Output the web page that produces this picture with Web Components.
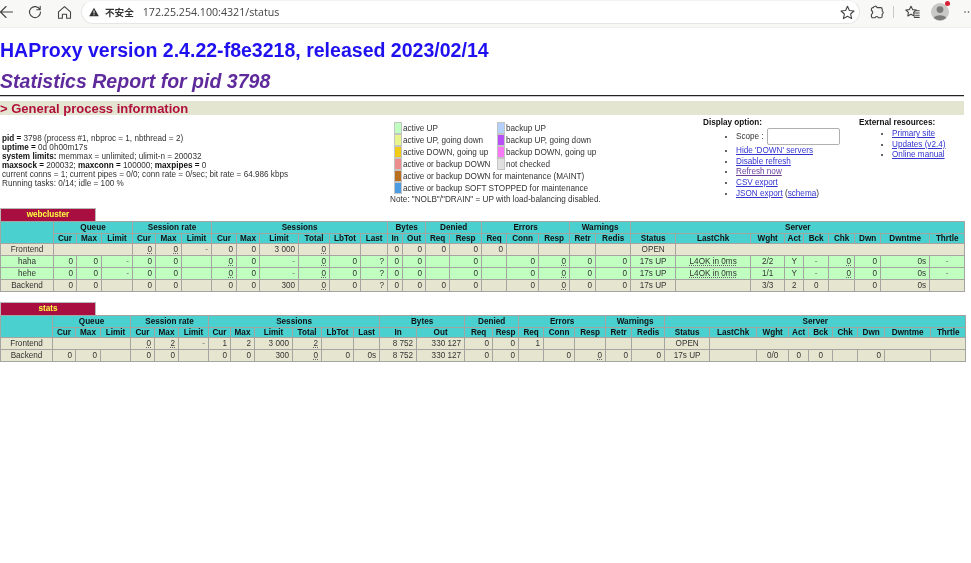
<!DOCTYPE html>
<html lang="en">
<head>
<meta charset="utf-8">
<title>Statistics Report for HAProxy</title>
<style>
html, body { margin: 0; background: #fff; }
body { font-family: "Liberation Sans", Arial, sans-serif; font-size: 8.17px; color: #222; overflow: hidden; filter: blur(.35px); }
link-list a { color: #3434d0; }
link-list a.seen { color: #663c99; }
link-list li.scope { height: 17px; line-height: 17px; margin-top: 0; margin-bottom: 1px; }
link-list input { box-sizing: border-box; width: 73px; height: 17px; margin: 0 0 0 1px; padding: 0; vertical-align: top; background: #fff; border: 1px solid #b0b0ae; border-radius: 2px; }
</style>
</head>
<body>
<browser-bar url="172.25.254.100:4321/status"></browser-bar>
<report-header version="HAProxy version 2.4.22-f8e3218, released 2023/02/14" title="Statistics Report for pid 3798"></report-header>
<info-panel>
  <process-info slot="process"></process-info>
  <status-legend slot="legend"></status-legend>
  <link-list slot="display" heading="Display option:">
    <li class="scope">Scope : <input type="text"></li>
    <li><a href="#">Hide 'DOWN' servers</a></li>
    <li><a href="#">Disable refresh</a></li>
    <li><a href="#" class="seen">Refresh now</a></li>
    <li><a href="#">CSV export</a></li>
    <li><a href="#">JSON export</a> (<a href="#">schema</a>)</li>
  </link-list>
  <link-list slot="external" heading="External resources:">
    <li><a href="#">Primary site</a></li>
    <li><a href="#">Updates (v2.4)</a></li>
    <li><a href="#">Online manual</a></li>
  </link-list>
</info-panel>
<stat-table name="webcluster"></stat-table>
<stat-table name="stats"></stat-table>

<script>
(function() {
    'use strict';

    // Column widths were read off the reference, they differ per proxy
    const TABLES = {
        webcluster: {
            top: 0,
            widths: [53,23,25,31,23,26,30,25,23,39,31,31,27,15,23,24,32,25,32,31,26,35,45,75,34,19,25,26,26,49,35],
            rows: [
                ['front', 'Frontend|^3|0_|0_|-|0|0|3 000|0_|||0|0|0|0|0|||||OPEN|^8'],
                ['up', 'haha|0|0|-|0|0||0_|0|-|0_|0|?|0|0||0||0|0_|0|0|17s UP|L4OK in 0ms_|2/2|Y|-|0_|0|0s|-'],
                ['up', 'hehe|0|0|-|0|0||0_|0|-|0_|0|?|0|0||0||0|0_|0|0|17s UP|L4OK in 0ms_|1/1|Y|-|0_|0|0s|-'],
                ['back', 'Backend|0|0||0|0||0|0|300|0_|0|?|0|0|0|0||0|0_|0|0|17s UP||3/3|2|0||0|0s|']
            ]
        },
        stats: {
            top: 10,
            widths: [52,23,25,30,24,24,30,22,24,38,29,32,26,37,48,28,26,25,31,31,26,33,45,47,32,20,24,25,27,46,35],
            rows: [
                ['front', 'Frontend|^3|0_|2_|-|1|2|3 000|2_|||8 752|330 127|0|0|1|||||OPEN|^8'],
                ['back', 'Backend|0|0||0|0||0|0|300|0_|0|0s|8 752|330 127|0|0||0|0_|0|0|17s UP||0/0|0|0||0||']
            ]
        }
    };

    const GROUPS = [['Queue',3],['Session rate',3],['Sessions',6],['Bytes',2],['Denied',2],['Errors',3],['Warnings',2],['Server',9]];
    const HEADS = 'Cur Max Limit Cur Max Limit Cur Max Limit Total LbTot Last In Out Req Resp Req Conn Resp Retr Redis Status LastChk Wght Act Bck Chk Dwn Dwntme Thrtle'.split(' ');
    const CENTERED = { 0: 1, 22: 1, 23: 1, 24: 1, 25: 1, 26: 1, 30: 1 };

    class BrowserBar extends HTMLElement {
        connectedCallback() {
            const url = this.getAttribute('url');
            this.attachShadow({ mode: 'open' }).innerHTML = `
                <style>
                    :host { display: flex; align-items: flex-start; height: 27px; background: #f8f8f7; border-bottom: 1px solid #f0f0ee; color: #3c3c3c; }
                    svg { display: block; fill: none; stroke: #444; stroke-width: 1.1; stroke-linecap: round; stroke-linejoin: round; }
                    .nav { display: flex; width: 81px; height: 24px; align-items: center; flex: none; }
                    .nav svg:nth-child(2) { margin-left: 15px; }
                    .nav svg:nth-child(3) { margin-left: 15px; }
                    .pill { flex: none; box-sizing: border-box; width: 779px; height: 24px; display: flex; align-items: center; background: #fff; border: 1px solid #e6e6e4; border-top-color: #f2f2f0; border-radius: 12px; }
                    .warn { margin-left: 7px; }
                    .lbl { margin-left: 6px; font: bold 9.6px "Noto Sans CJK SC", sans-serif; color: #333; }
                    .url { margin-left: 9px; font: 10.65px "Open Sans", sans-serif; color: #444; }
                    .grow { flex: 1; }
                    .star { margin-right: 4px; }
                    .tools { display: flex; align-items: center; height: 24px; flex: none; }
                </style>
                <div class="nav">
                    <svg width="13" height="14" viewBox="0 0 13 14"><path d="M12.5 7H0.5M6 1.5L0.5 7L6 12.5"/></svg>
                    <svg width="14" height="14" viewBox="0 0 14 14"><path d="M11.9 4.6A5.5 5.5 0 1 0 12.5 7M12.2 1.4V4.8H8.8"/></svg>
                    <svg width="15" height="15" viewBox="0 0 15 15"><path d="M1.5 6.8L7.5 1.6L13.5 6.8V13.3H9.6V9.2H5.4V13.3H1.5Z"/></svg>
                </div>
                <div class="pill">
                    <svg class="warn" width="10" height="10" viewBox="0 0 12 11" style="stroke:none"><path fill="#333" d="M6 .3L11.8 10.6H.2Z"/><path fill="#fff" d="M5.4 3.8h1.2v3.6H5.4zM5.4 8.2h1.2v1.2H5.4z"/></svg>
                    <span class="lbl">不安全</span>
                    <span class="url">${url}</span>
                    <span class="grow"></span>
                    <svg class="star" width="15" height="15" viewBox="0 0 15 15"><path d="M7.5 1.3L9.4 5.5L14 6L10.6 9L11.6 13.6L7.5 11.2L3.4 13.6L4.4 9L1 6L5.6 5.5Z"/></svg>
                </div>
                <div class="tools">
                    <svg style="margin-left:10px" width="14" height="14" viewBox="0 0 14 14"><path d="M5 1.2C6 1 6.8 1.6 7 2.6H10.6C11.6 2.6 12.2 3.2 12.2 4.2V6C13.4 6.3 13.6 8.6 12.2 9V11C12.2 12.2 11.6 12.8 10.6 12.8H8.4C8 11 5.4 11 5 12.8H3C2 12.8 1.4 12.2 1.4 11V9.2C3.2 8.8 3.2 6 1.4 5.6V4.2C1.4 3.2 2 2.6 3 2.6H3.4C3.6 1.8 4.2 1.3 5 1.2Z"/></svg>
                    <span style="margin-left:9px;width:1px;height:12px;background:#c9c9c7"></span>
                    <svg style="margin-left:11px" width="15" height="14" viewBox="0 0 15 14"><path d="M6 1.2L7.6 4.6L11.2 5L8.6 7.4L9.2 11L6 9.2L2.8 11L3.4 7.4L.8 5L4.4 4.6ZM9.8 8H14.2M10.6 10.2H14.2M9.4 12.4H14.2M11.4 5.8H14.2"/></svg>
                    <span style="margin-left:11px;position:relative;width:18px;height:18px;border-radius:50%;background:#c9c9c6;display:block">
                        <svg width="18" height="18" viewBox="0 0 17 17" style="stroke:none"><circle cx="8.5" cy="6.2" r="3.2" fill="#7b7b79"/><path fill="#7b7b79" d="M2.8 14.2C3.4 10.8 13.6 10.8 14.2 14.2A8.5 8.5 0 0 1 2.8 14.2Z"/></svg>
                        <span style="position:absolute;right:-1px;top:-2px;width:5px;height:5px;border-radius:50%;background:#d81f34"></span>
                    </span>
                    <svg style="margin-left:15px;flex:none" width="9" height="4" viewBox="0 0 9 4"><circle cx="1" cy="2" r=".8" fill="#444" stroke="none"/><circle cx="4.5" cy="2" r=".8" fill="#444" stroke="none"/><circle cx="8" cy="2" r=".8" fill="#444" stroke="none"/></svg>
                </div>`;
        }
    }

    class ReportHeader extends HTMLElement {
        connectedCallback() {
            this.attachShadow({ mode: 'open' }).innerHTML = `
                <style>
                    :host { display: block; margin-right: 7px; }
                    h1, h2, h3 { margin: 0; font-family: "Liberation Sans", Arial, sans-serif; font-weight: bold; }
                    h1 { margin-top: 10px; height: 25px; line-height: 25px; font-size: 19.55px; color: #1f10f0; }
                    h2 { margin-top: 6px; height: 25px; line-height: 25px; font-size: 19.55px; font-style: italic; color: #5f2a9c; }
                    .rule { margin-top: 1px; height: 1px; background: #222; border-bottom: 1px solid #ccc; }
                    h3 { margin-top: 4px; height: 14px; line-height: 15px; font-size: 13px; background: #e4e5d0; color: #b0103c; }
                </style>
                <h1>${this.getAttribute('version')}</h1>
                <h2>${this.getAttribute('title')}</h2>
                <div class="rule"></div>
                <h3>&gt; General process information</h3>`;
        }
    }

    class InfoPanel extends HTMLElement {
        connectedCallback() {
            this.attachShadow({ mode: 'open' }).innerHTML = `
                <style>
                    :host { display: grid; grid-template-columns: 390px 313px 156px 1fr; height: 93px; margin-right: 7px; }
                    ::slotted([slot=process]) { margin-top: 20px; }
                </style>
                <slot name="process"></slot>
                <slot name="legend"></slot>
                <slot name="display"></slot>
                <slot name="external"></slot>`;
        }
    }

    class ProcessInfo extends HTMLElement {
        connectedCallback() {
            this.attachShadow({ mode: 'open' }).innerHTML = `
                <style>
                    :host { display: block; padding-left: 2px; line-height: 8.9px; white-space: nowrap; color: #333; }
                    b { color: #111; }
                </style>
                <b>pid = </b>3798 (process #1, nbproc = 1, nbthread = 2)<br>
                <b>uptime = </b>0d 0h00m17s<br>
                <b>system limits:</b> memmax = unlimited; ulimit-n = 200032<br>
                <b>maxsock = </b>200032; <b>maxconn = </b>100000; <b>maxpipes = </b>0<br>
                current conns = 1; current pipes = 0/0; conn rate = 0/sec; bit rate = 64.986 kbps<br>
                Running tasks: 0/14; idle = 100 %`;
        }
    }

    class StatusLegend extends HTMLElement {
        connectedCallback() {
            const item = (c, t) => `<span class="sw" style="background:${c}"></span><span>${t}</span>`;
            this.attachShadow({ mode: 'open' }).innerHTML = `
                <style>
                    :host { display: block; white-space: nowrap; color: #333; padding-top: 7px; }
                    .g { display: grid; grid-template-columns: 8px 95px 8px auto; grid-auto-rows: 12px; margin-left: 4px; align-items: center; }
                    .g span:not(.sw) { padding-left: 1px; }
                    .sw { height: 12px; box-sizing: border-box; border: 1px solid #c4c4c4; }
                    .wide { grid-column: 2 / 5; }
                    .note { line-height: 10px; margin-top: 1px; }
                </style>
                <div class="g">
                    ${item('#c0ffc0', 'active UP')}${item('#b4d0fc', 'backup UP')}
                    ${item('#e8f48c', 'active UP, going down')}${item('#b850f8', 'backup UP, going down')}
                    ${item('#f0cc18', 'active DOWN, going up')}${item('#f878f8', 'backup DOWN, going up')}
                    ${item('#ec8c8c', 'active or backup DOWN')}${item('#e0e0e0', 'not checked')}
                    <span class="sw" style="background:#b87020"></span><span class="wide">active or backup DOWN for maintenance (MAINT)</span>
                    <span class="sw" style="background:#4c9ce4"></span><span class="wide">active or backup SOFT STOPPED for maintenance</span>
                </div>
                <div class="note">Note: "NOLB"/"DRAIN" = UP with load-balancing disabled.</div>`;
        }
    }

    class LinkList extends HTMLElement {
        connectedCallback() {
            this.attachShadow({ mode: 'open' }).innerHTML = `
                <style>
                    :host { display: block; padding-top: 3px; white-space: nowrap; color: #333; }
                    b { display: block; line-height: 10px; color: #111; }
                    ul { margin: 0; padding: 0 0 0 33px; list-style: disc; }
                    ::slotted(li) { line-height: 10.7px; }
                    ::slotted(li:first-child) { margin-top: 1px; }
                </style>
                <b>${this.getAttribute('heading')}</b>
                <ul><slot></slot></ul>`;
        }
    }

    class StatTable extends HTMLElement {
        connectedCallback() {
            const name = this.getAttribute('name');
            const t = TABLES[name];
            const cols = t.widths.map(w => `<col style="width:${w}px">`).join('');
            const groups = GROUPS.map(g => `<th colspan="${g[1]}">${g[0]}</th>`).join('');
            const heads = HEADS.map(h => `<th>${h}</th>`).join('');
            const rows = t.rows.map(r => {
                let idx = 0;
                const cells = r[1].split('|').map(v => {
                    if (v[0] === '^') {
                        const n = +v.slice(1);
                        idx += n;
                        return `<td colspan="${n}"></td>`;
                    }
                    const cls = CENTERED[idx] ? ' class="c"' : '';
                    idx++;
                    const dim = v === '-' ? ' style="color:#777"' : '';
                    const txt = v.slice(-1) === '_' ? `<u>${v.slice(0, -1)}</u>` : v;
                    return `<td${cls}${dim}>${txt}</td>`;
                }).join('');
                return `<tr class="${r[0]}">${cells}</tr>`;
            }).join('');
            this.attachShadow({ mode: 'open' }).innerHTML = `
                <style>
                    :host { display: block; margin-top: ${t.top}px; margin-right: 7px; }
                    .name { box-sizing: border-box; width: 96px; height: 13px; line-height: 12px; text-align: center; font-weight: bold; background: #a80f40; color: #ffff40; border: 1px solid #b8b8b8; border-bottom: 0; }
                    table { border-collapse: collapse; table-layout: fixed; width: 964px; }
                    th, td { padding: 0 3px 0 0; border: 1px solid #a4a4a0; white-space: nowrap; overflow: hidden; color: #333; }
                    th { padding: 0; background: #4bd0d0; color: #111; text-align: center; font-weight: bold; }
                    tr.g { height: 12px; }
                    tr.h { height: 10px; }
                    tbody tr { height: 12px; }
                    td { text-align: right; }
                    td.c { text-align: center; padding: 0; }
                    tr.front td, tr.back td { background: #e6e6d0; }
                    tr.up td { background: #c0ffc0; }
                    u { text-decoration: underline dotted #666; text-underline-offset: 1px; }
                </style>
                <div class="name">${name}</div>
                <table>
                    <colgroup>${cols}</colgroup>
                    <thead>
                        <tr class="g"><th rowspan="2"></th>${groups}</tr>
                        <tr class="h">${heads}</tr>
                    </thead>
                    <tbody>${rows}</tbody>
                </table>`;
        }
    }

    customElements.define('browser-bar', BrowserBar);
    customElements.define('report-header', ReportHeader);
    customElements.define('info-panel', InfoPanel);
    customElements.define('process-info', ProcessInfo);
    customElements.define('status-legend', StatusLegend);
    customElements.define('link-list', LinkList);
    customElements.define('stat-table', StatTable);
})();
</script>
</body>
</html>
